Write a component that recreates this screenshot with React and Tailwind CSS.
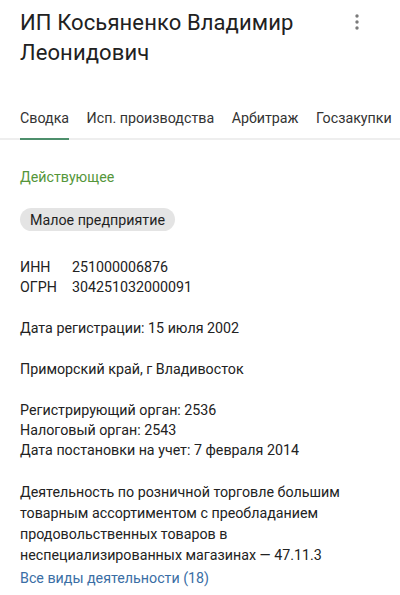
import React from 'react';

const tabs = ['Сводка', 'Исп. производства', 'Арбитраж', 'Госзакупки'];

const KebabIcon = () => (
    <svg width="6" height="16" viewBox="0 0 6 16" className="text-[#7a7a7a]">
        <circle cx="3" cy="2" r="1.7" fill="currentColor" />
        <circle cx="3" cy="8" r="1.7" fill="currentColor" />
        <circle cx="3" cy="14" r="1.7" fill="currentColor" />
    </svg>
);

const App = () => {
    return (
        <div className="w-[400px] h-[595px] overflow-hidden bg-white text-[#222222] font-['Roboto',sans-serif]">
            {/* ── Header ───────────────────────────── */}
            <div className="flex items-start justify-between pl-5 pr-10 pt-2">
                <h1 className="text-[22px] leading-[30px] font-normal text-[#212121] tracking-[0.1px]">
                    ИП Косьяненко Владимир Леонидович
                </h1>
                <div className="pt-[6px] shrink-0 pl-4">
                    <KebabIcon />
                </div>
            </div>

            {/* ── Tabs ─────────────────────────────── */}
            <div className="mt-[40px] flex gap-[17.5px] px-5 whitespace-nowrap border-b-2 border-[#eeeeee]">
                {tabs.map((t, i) => (
                    <div
                        key={t}
                        className={
                            i === 0
                                ? 'text-[14.25px] leading-[20px] pb-[10px] text-[#333333] border-b-2 border-[#4e8f6c] -mb-[2px]'
                                : 'text-[14.25px] leading-[20px] pb-[10px] text-[#333333]'
                        }
                    >
                        {t}
                    </div>
                ))}
            </div>

            {/* ── Summary ──────────────────────────── */}
            <div className="px-5 pt-[27px] text-[14.25px] leading-[20px]">
                <div className="text-[#55963a]">Действующее</div>

                <div className="mt-[21px] inline-flex h-[23px] items-center rounded-full bg-[#e4e4e4] px-[10px] text-[#1f1f1f]">
                    Малое предприятие
                </div>

                <div className="mt-[26px] grid grid-cols-[52px_1fr]">
                    <span>ИНН</span>
                    <span>251000006876</span>
                    <span>ОГРН</span>
                    <span>304251032000091</span>
                </div>

                <p className="mt-[21px]">Дата регистрации: 15 июля 2002</p>

                <p className="mt-[21px]">Приморский край, г Владивосток</p>

                <div className="mt-[21px]">
                    <p>Регистрирующий орган: 2536</p>
                    <p>Налоговый орган: 2543</p>
                    <p>Дата постановки на учет: 7 февраля 2014</p>
                </div>

                <p className="mt-[22px] leading-[21px] pr-2">
                    Деятельность по розничной торговле большим товарным ассортиментом с преобладанием
                    продовольственных товаров в неспециализированных магазинах — 47.11.3
                </p>
                <a className="mt-[2px] block text-[#3a6ea5]">Все виды деятельности (18)</a>
            </div>
        </div>
    );
};

export default App;
